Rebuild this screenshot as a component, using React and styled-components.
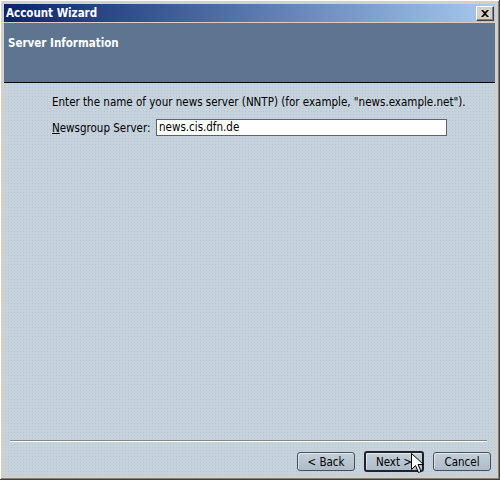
import React from 'react'
import styled, { createGlobalStyle } from 'styled-components'

const Global = createGlobalStyle`
  html, body {
    margin: 0;
    padding: 0;
    background: #d4d0c8;
  }
  * { box-sizing: border-box; }
`;

const Window = styled.div`
  width: 500px;
  height: 480px;
  padding: 4px 4px 4px 4px;
  background: #d4d0c8;
  border-right: 1px solid #404040;
  border-bottom: 1px solid #404040;
  box-shadow: inset 1px 1px 0 #ffffff, inset -1px -1px 0 #808080;
  display: flex;
  flex-direction: column;
  font-family: "DejaVu Sans Condensed", "DejaVu Sans", sans-serif;
  font-size: 11.5px;
  color: #000;
`;

const TitleBar = styled.div`
  height: 18px;
  background: linear-gradient(to right, #0a246a, #a6caf0);
  display: flex;
  align-items: center;
  justify-content: space-between;
  padding: 0 1px 0 2px;
`;

const Title = styled.span`
  color: #fff;
  font-weight: bold;
  font-size: 11.5px;
`;

const CloseButton = styled.div`
  width: 18px;
  height: 15px;
  background: #d4d0c8;
  border-top: 1px solid #ffffff;
  border-left: 1px solid #ffffff;
  border-right: 1px solid #404040;
  border-bottom: 1px solid #404040;
  box-shadow: inset -1px -1px 0 #808080;
  display: flex;
  align-items: center;
  justify-content: center;
`;

const Header = styled.div`
  margin-top: 1px;
  height: 60px;
  background: #5d7591;
  border-bottom: 1px solid #000;
  padding: 13px 4px 0 4px;
`;

const HeaderTitle = styled.div`
  color: #fff;
  font-weight: bold;
  font-size: 11.5px;
`;

const Body = styled.div`
  flex: 1;
  display: flex;
  flex-direction: column;
  background-color: #c6d2dc;
  background-image: radial-gradient(circle, rgba(150, 175, 200, 0.35) 0.6px, transparent 0.8px);
  background-size: 3px 3px;
  padding: 12px 6px 0 48px;
`;

const Intro = styled.div`
  margin-bottom: 10px;
`;

const FieldRow = styled.div`
  display: flex;
  align-items: center;
`;

const Label = styled.label`
  width: 104px;
  u { text-decoration: underline; }
`;

const TextInput = styled.div`
  width: 291px;
  height: 17px;
  background: #fff;
  border: 1px solid #5a6470;
  padding: 0 2px;
  line-height: 15px;
`;

const Spacer = styled.div`
  flex: 1;
`;

const Footer = styled.div`
  position: relative;
  margin: 0 -2px 0 -42px;
  padding-bottom: 3px;
`;

const Separator = styled.div`
  border-top: 1px solid #7f8790;
  border-bottom: 1px solid #ffffff;
  margin: 0 4px 9px 0;
`;

const ButtonRow = styled.div`
  display: flex;
  justify-content: flex-end;
  align-items: center;
  gap: 9px;
`;

const Button = styled.div`
  width: ${p => (p.$default ? '60px' : '58px')};
  height: ${p => (p.$default ? '21px' : '19px')};
  border-radius: 3px;
  border: ${p => (p.$default ? '2px solid #202428' : '1px solid #4a5058')};
  background: linear-gradient(#c3ced8, #aebbc8);
  box-shadow: inset 1px 1px 0 rgba(255,255,255,0.5);
  display: flex;
  align-items: center;
  justify-content: center;
`;

const Cursor = styled.svg`
  position: absolute;
  left: 401px;
  top: 13px;
`;

export default function App() {
  return (
    <>
      <Global />
      <Window>
        <TitleBar>
          <Title>Account Wizard</Title>
          <CloseButton>
            <svg width="8" height="7" viewBox="0 0 8 7">
              <path d="M0 0h2l2 2 2-2h2L5 3.5 8 7H6L4 5 2 7H0l3-3.5z" fill="#000" />
            </svg>
          </CloseButton>
        </TitleBar>
        <Header>
          <HeaderTitle>Server Information</HeaderTitle>
        </Header>
        <Body>
          <Intro>Enter the name of your news server (NNTP) (for example, "news.example.net").</Intro>
          <FieldRow>
            <Label><u>N</u>ewsgroup Server:</Label>
            <TextInput>news.cis.dfn.de</TextInput>
          </FieldRow>
          <Spacer />
          <Footer>
            <Separator />
            <ButtonRow>
              <Button>&lt; Back</Button>
              <Button $default>Next &gt;</Button>
              <Button>Cancel</Button>
            </ButtonRow>
            <Cursor width="13" height="21" viewBox="0 0 13 21">
              <path d="M0.5 0.5 L0.5 16.5 L4.5 12.5 L7.5 19.5 L10 18.5 L7 11.5 L12.5 11.5 Z" fill="#fff" stroke="#000" strokeWidth="1" />
            </Cursor>
          </Footer>
        </Body>
      </Window>
    </>
  );
}
